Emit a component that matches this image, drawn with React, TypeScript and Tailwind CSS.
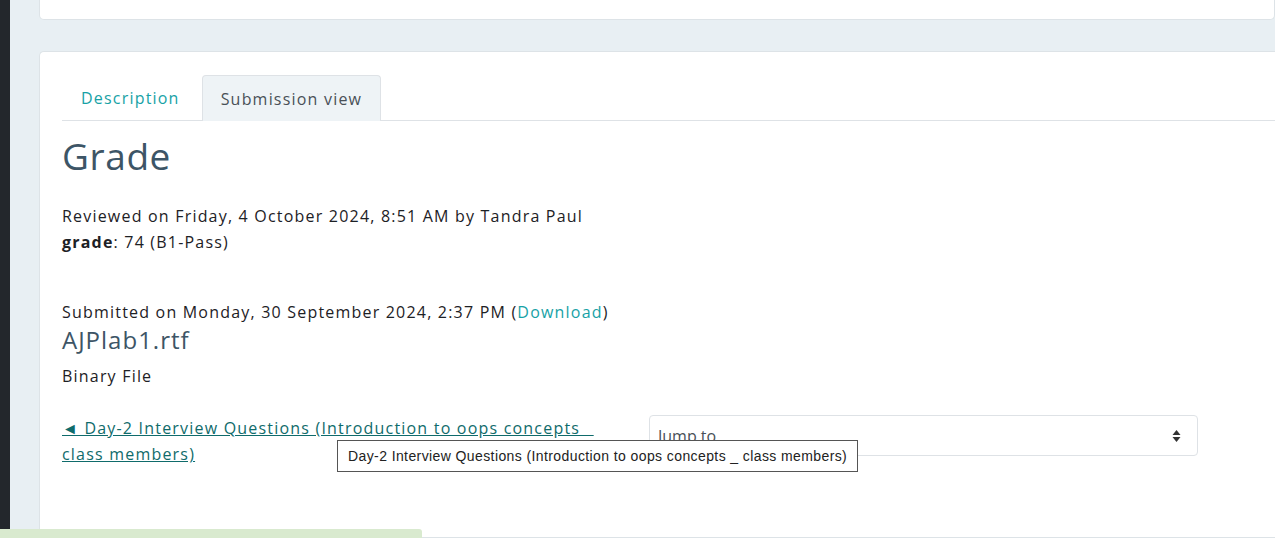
const font = { fontFamily: '"Open Sans", "Noto Sans", sans-serif' }

export default function App() {
  return (
    <div className="w-[1275px] h-[538px] overflow-hidden bg-[#e8eff3] flex relative" style={font}>
      {/* left rail */}
      <div className="w-[10px] shrink-0 bg-[#23272c]" />

      <div className="flex-1 pl-[29px] flex flex-col">
        {/* previous card (bottom edge only) */}
        <div className="h-[20px] bg-white border border-t-0 border-[#dde3e7] rounded-b-[5px]" />

        {/* main card */}
        <div className="mt-[31px] flex-1 bg-white border border-r-0 border-[#dde3e7] rounded-tl-[5px] pl-[22px] pt-[23px] text-[#1d2125] tracking-[1.2px]">
          {/* tabs */}
          <div className="flex border-b border-[#dee2e6] h-[46px]">
            <div className="pl-[19px] pr-[20px] flex items-center text-[16px] text-[#17a2a6]">Description</div>
            <div className="ml-[2px] px-[18px] flex items-center text-[16px] text-[#495057] bg-[#eef3f6] border border-b-0 border-[#dee2e6] rounded-t-[4px] -mb-px">
              Submission view
            </div>
          </div>

          <h2 className="mt-[12px] text-[37px] leading-[46px] tracking-[0.6px] text-[#3d5566]">Grade</h2>

          <div className="mt-[24px] text-[16px] leading-[26px]">
            <div>Reviewed on Friday, 4 October 2024, 8:51 AM by Tandra Paul</div>
            <div>
              <span className="font-bold">grade</span>: 74 (B1-Pass)
            </div>
          </div>

          <div className="mt-[44px] text-[16px] leading-[26px]">
            Submitted on Monday, 30 September 2024, 2:37 PM (
            <span className="text-[#17a2a6]">Download</span>)
          </div>
          <div className="text-[24px] leading-[30px] tracking-[1px] text-[#3d5566]">AJPlab1.rtf</div>
          <div className="mt-[8px] text-[16px] leading-[26px]">Binary File</div>

          <div className="mt-[26px] flex items-start">
            <a className="w-[565px] shrink-0 text-[16px] leading-[26px] text-[#0f6b6b] underline">
              ◄ Day-2 Interview Questions (Introduction to oops concepts _ class members)
            </a>
            <div className="ml-[22px] w-[549px] h-[41px] border border-[#dee2e6] rounded-[4px] flex items-center justify-between pl-[8px] pr-[16px] text-[16px] tracking-normal text-[#495057]">
              <span>Jump to</span>
              <svg width="9" height="14" viewBox="0 0 9 14" className="text-[#333]">
                <path d="M4.5 1 L8.5 6 H0.5 Z" fill="currentColor" />
                <path d="M4.5 13 L8.5 8 H0.5 Z" fill="currentColor" />
              </svg>
            </div>
          </div>
        </div>
      </div>

      {/* tooltip */}
      <div
        className="absolute left-[337px] top-[440px] w-[521px] h-[32px] bg-white border border-[#555] flex items-center pl-[10px] text-[14px] tracking-[0.4px] text-[#222]"
        style={{ fontFamily: '"Liberation Sans", Arial, sans-serif' }}
      >
        Day-2 Interview Questions (Introduction to oops concepts _ class members)
      </div>

      {/* bottom progress strip */}
      <div className="absolute left-0 bottom-0 w-[422px] h-[9px] bg-[#d9eacf] rounded-tr-[3px]" />
    </div>
  )
}
